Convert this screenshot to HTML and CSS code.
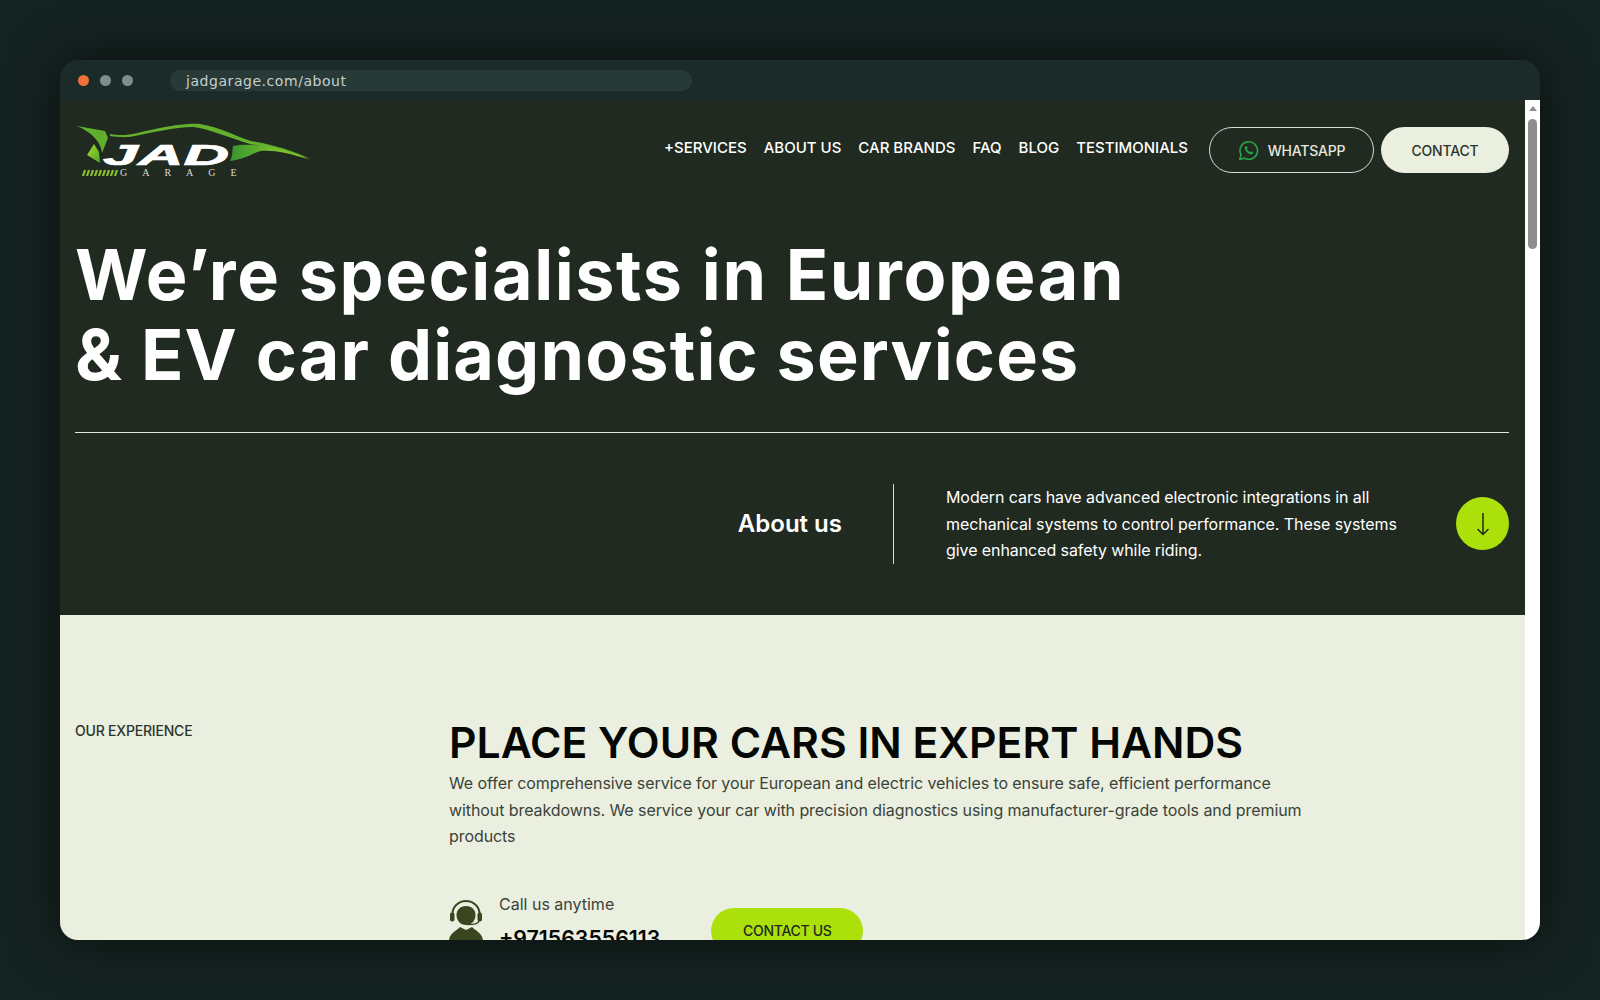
FILE: index.html
```html
<!DOCTYPE html>
<html lang="en">
<head>
  <meta charset="UTF-8">
  <title>JAD Garage - About</title>
  <link rel="stylesheet" href="styles.css">
</head>
<body>
  <div class="browser">
    <!-- Title bar -->
    <div class="title-bar">
      <div class="dots">
        <span class="dot dot-red"></span>
        <span class="dot"></span>
        <span class="dot"></span>
      </div>
      <div class="address-bar">jadgarage.com/about</div>
    </div>

    <div class="viewport">
      <div class="page">
        <!-- Hero -->
        <section class="hero">
          <header class="nav">
            <div class="logo">
              <svg class="logo-car" width="240" height="60" viewBox="0 0 240 60">
                <defs>
                  <linearGradient id="leaf" x1="0" y1="0" x2="1" y2="1">
                    <stop offset="0" stop-color="#a8dc2c"></stop>
                    <stop offset="1" stop-color="#4da52c"></stop>
                  </linearGradient>
                  <linearGradient id="wing" x1="0" y1="0" x2="1" y2="0">
                    <stop offset="0" stop-color="#37962f"></stop>
                    <stop offset="1" stop-color="#a8dc2c"></stop>
                  </linearGradient>
                </defs>
                <path d="M2 4 L30 9 L33 16 L27 31 C26 22 20 12 2 4 Z" fill="#5fae2c"></path>
                <path d="M19 22 L12 33 L25 41 L24 30 Z" fill="url(#leaf)"></path>
                <path d="M35 12 C52 15 60 11 80 7 C95 4 112 1 125 2 C145 5 160 14 176 19 C195 22 220 29 235 37 C215 31 195 25 175 22 C158 17 135 7 118 5 C100 5 75 11 60 14 C50 16 42 15 35 14 Z" fill="#63b02c"></path>
                <path d="M158 24 C175 21 200 23 235 38 C215 31 198 28 186 29 C177 31 172 37 155 39 C158 34 157 28 158 24 Z" fill="url(#wing)"></path>
                <path d="M8 54 L10 48 M12 54 L14 48 M16 54 L18 48 M20 54 L22 48 M24 54 L26 48 M28 54 L30 48 M32 54 L34 48 M36 54 L38 48 M40 54 L42 48" stroke="#8cc22a" stroke-width="2.2"></path>
              </svg>
              <span class="logo-jad">JAD</span>
              <span class="logo-garage">GARAGE</span>
            </div>
            <nav class="nav-links">
              <a>+SERVICES</a>
              <a>ABOUT US</a>
              <a>CAR BRANDS</a>
              <a>FAQ</a>
              <a>BLOG</a>
              <a>TESTIMONIALS</a>
            </nav>
            <div class="nav-buttons">
              <a class="btn btn-outline">
                <svg width="21" height="21" viewBox="0 0 24 24" fill="none" stroke="#25a244" stroke-width="1.9" stroke-linejoin="round">
                  <path d="M2 22.2 L3.5 16.8 A10 10 0 1 1 7.3 20.7 Z"></path>
                  <path d="M8.6 7.2 C8 7.6 7.4 8.6 7.7 10 C8.3 12.8 11.2 15.8 14.2 16.4 C15.6 16.6 16.6 16 17 15.2 L17 13.8 L14.8 12.8 L13.7 13.9 C12.3 13.4 10.8 11.9 10.2 10.4 L11.2 9.3 L10.2 7.2 Z" fill="#25a244" stroke="none"></path>
                </svg>
                WHATSAPP
              </a>
              <a class="btn btn-light">CONTACT</a>
            </div>
          </header>

          <h1 class="hero-title">We’re specialists in European<br><span class="hero-title-second">&amp; EV car diagnostic services</span></h1>

          <div class="hero-about">
            <h2 class="about-label">About us</h2>
            <p class="about-text">Modern cars have advanced electronic integrations in all mechanical systems to control performance. These systems give enhanced safety while riding.</p>
            <a class="arrow-button">
              <svg width="16" height="26" viewBox="0 0 16 26" fill="none" stroke="#202a21" stroke-width="1.5">
                <path d="M8 2V23.5M2.5 18L8 23.5L13.5 18"></path>
              </svg>
            </a>
          </div>
        </section>

        <!-- Experience -->
        <section class="experience">
          <div class="experience-label">OUR EXPERIENCE</div>
          <div class="experience-body">
            <h2 class="experience-title">PLACE YOUR CARS IN EXPERT HANDS</h2>
            <p class="experience-text">We offer comprehensive service for your European and electric vehicles to ensure safe, efficient performance without breakdowns. We service your car with precision diagnostics using manufacturer-grade tools and premium products</p>
            <div class="call-row">
              <svg class="call-icon" width="36" height="50" viewBox="1 0 36 50">
                <path d="M18 6C24 6 27.5 10 27.5 15C27.5 20 24 25 18 25C12 25 8.5 20 8.5 15C8.5 10 12 6 18 6Z" fill="#39461f"></path>
                <path d="M4.5 16V13.5A13.5 12.5 0 0 1 31.5 13.5V16" fill="none" stroke="#39461f" stroke-width="2"></path>
                <rect x="2" y="12.5" width="4.5" height="9" rx="2" fill="#39461f"></rect>
                <rect x="29.5" y="12.5" width="4.5" height="9" rx="2" fill="#39461f"></rect>
                <path d="M31 21C30 24 27 24.5 19 24.5" fill="none" stroke="#39461f" stroke-width="1.5"></path>
                <path d="M1 41C1 34 8 31 12 27L18 30L24 27C28 31 35 34 35 41V50H1Z" fill="#39461f"></path>
              </svg>
              <div class="call-info">
                <span class="call-label">Call us anytime</span>
                <span class="call-number">+971563556113</span>
              </div>
              <a class="btn btn-lime">CONTACT US</a>
            </div>
          </div>
        </section>
      </div>

      <!-- Scrollbar -->
      <div class="scrollbar">
        <span class="scroll-up"></span>
        <span class="scroll-thumb"></span>
      </div>
    </div>
  </div>
</body>
</html>
```

FILE: styles.css
```css
* {
  margin: 0;
  padding: 0;
  box-sizing: border-box;
}

body {
  height: 1000px;
  padding: 60px;
  overflow: hidden;
  background-color: #152320;
  font-family: Inter, "Noto Sans", sans-serif;
}

.browser {
  height: 880px;
  display: flex;
  flex-direction: column;
  border-radius: 18px;
  overflow: hidden;
  box-shadow: 0 0 50px rgba(0, 0, 0, 0.55);
}

.title-bar {
  height: 40px;
  flex-shrink: 0;
  display: flex;
  align-items: center;
  padding-left: 18px;
  background-color: #1b2b29;
}

.dots {
  display: flex;
  gap: 11px;
}

.dot {
  width: 11px;
  height: 11px;
  border-radius: 50%;
  background-color: #7e8f8a;
}

.dot-red {
  background-color: #f0703a;
}

.address-bar {
  width: 522px;
  height: 21px;
  margin-left: 37px;
  padding-left: 16px;
  border-radius: 11px;
  background-color: #283a38;
  color: #c6cecb;
  font-family: "DejaVu Sans", sans-serif;
  font-size: 14px;
  letter-spacing: 0.55px;
  line-height: 22px;
}

.viewport {
  flex: 1;
  min-height: 0;
  display: flex;
}

.page {
  flex: 1;
  min-width: 0;
  overflow: hidden;
  background-color: #ebefe0;
}

.hero {
  height: 515px;
  padding: 0 16px 0 15px;
  background-color: #202a21;
  color: white;
}

.nav {
  display: flex;
  align-items: flex-start;
  height: 92px;
  padding-top: 27px;
}

.logo {
  position: relative;
  width: 240px;
  height: 60px;
  margin-top: -5px;
  margin-right: auto;
  flex-shrink: 0;
}

.logo-jad {
  position: absolute;
  left: 28px;
  top: 22px;
  color: white;
  font-family: "Liberation Sans", sans-serif;
  font-size: 30px;
  font-weight: 700;
  font-style: italic;
  line-height: 22px;
  -webkit-text-stroke: 0.7px white;
  transform: scaleX(2.1);
  transform-origin: left;
}

.logo-garage {
  position: absolute;
  left: 45px;
  top: 47px;
  color: #d8dcd4;
  font-family: "Liberation Serif", serif;
  font-size: 10px;
  letter-spacing: 15px;
  line-height: 8px;
}

.nav-links {
  display: flex;
  gap: 17px;
  margin-right: 21px;
  height: 40px;
  align-items: center;
}

.nav-links a {
  font-size: 15px;
  font-weight: 500;
}

.nav-buttons {
  display: flex;
  gap: 7px;
}

.btn {
  display: flex;
  align-items: center;
  justify-content: center;
  height: 46px;
  border-radius: 23px;
  font-size: 14px;
  font-weight: 500;
  letter-spacing: -0.2px;
}

.btn-outline {
  width: 165px;
  gap: 9px;
  border: 1px solid #d8dcd4;
  color: #e4e7dd;
}

.btn-light {
  width: 128px;
  background-color: #ebefe0;
  color: #2c352b;
}

.btn-lime {
  width: 152px;
  height: 46px;
  margin-left: 51px;
  margin-top: 16px;
  background-color: #abe00b;
  color: #202a21;
  letter-spacing: -0.3px;
}

.hero-title {
  height: 200px;
  margin-top: 41px;
  padding-top: 2px;
  border-bottom: 1px solid #e6e8e0;
  font-size: 70px;
  font-weight: 700;
  letter-spacing: 1.6px;
  line-height: 80px;
}

.hero-title-second {
  letter-spacing: 1.15px;
}

.hero-about {
  display: flex;
  align-items: center;
  margin-top: 51px;
}

.about-label {
  width: 767px;
  text-align: right;
  font-size: 24px;
  font-weight: 600;
}

.about-text {
  width: 511px;
  margin-left: 51px;
  padding-left: 52px;
  border-left: 1px solid #d8dcd4;
  font-size: 16px;
  letter-spacing: -0.08px;
  line-height: 26.5px;
}

.arrow-button {
  width: 53px;
  height: 53px;
  margin-left: auto;
  border-radius: 50%;
  display: flex;
  align-items: center;
  justify-content: center;
  background-color: #abe00b;
}

.experience {
  display: flex;
  padding: 105px 15px 0;
}

.experience-label {
  width: 374px;
  flex-shrink: 0;
  color: #2c352b;
  font-size: 14px;
  font-weight: 500;
  letter-spacing: -0.2px;
  line-height: 22px;
}

.experience-title {
  margin-bottom: 4px;
  color: #050705;
  font-size: 42.7px;
  font-weight: 600;
  line-height: 46px;
}

.experience-text {
  width: 870px;
  color: #3a4339;
  font-size: 16px;
  letter-spacing: -0.08px;
  line-height: 26.5px;
}

.call-row {
  display: flex;
  margin-top: 42px;
}

.call-icon {
  flex-shrink: 0;
  margin-top: 8px;
}

.call-info {
  display: flex;
  flex-direction: column;
  margin-left: 14px;
}

.call-label {
  color: #3a4339;
  font-size: 16px;
  line-height: 24px;
}

.call-number {
  margin-top: 8px;
  color: #050705;
  font-size: 21.3px;
  font-weight: 600;
  line-height: 28px;
}

.scrollbar {
  width: 15px;
  flex-shrink: 0;
  display: flex;
  flex-direction: column;
  align-items: center;
  background-color: white;
}

.scroll-up {
  width: 0;
  height: 0;
  margin-top: 6px;
  border-left: 4.5px solid transparent;
  border-right: 4.5px solid transparent;
  border-bottom: 5px solid #8e8e8e;
}

.scroll-thumb {
  width: 9px;
  height: 130px;
  margin-top: 8px;
  border-radius: 5px;
  background-color: #8e8e8e;
}
```
